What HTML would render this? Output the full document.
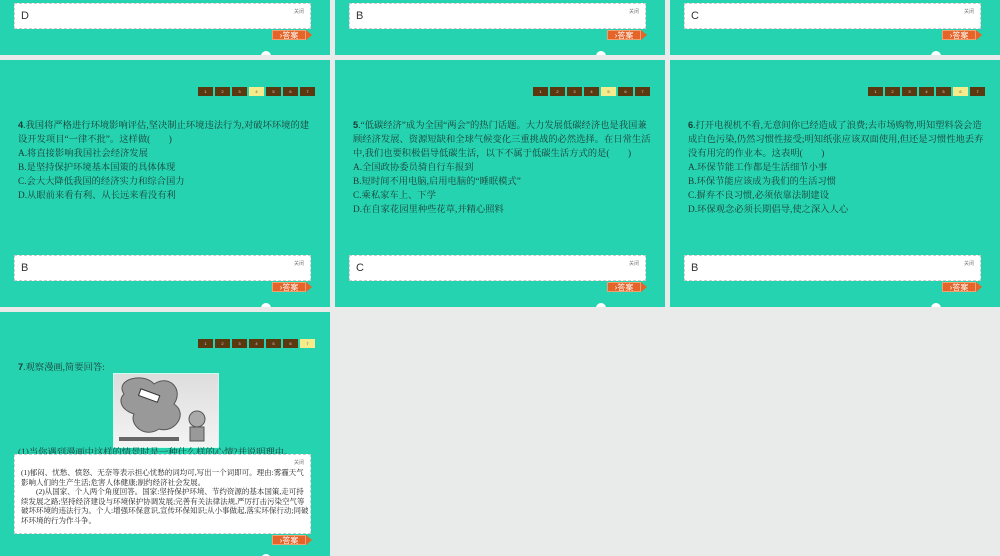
<!DOCTYPE html>
<html><head><meta charset="utf-8"><style>
body{margin:0;width:1000px;height:556px;background:#e8ebea;position:relative;overflow:hidden;font-family:"Liberation Serif","Noto Serif CJK SC",serif}
.p{position:absolute;background:#26d3b0;width:330px;overflow:hidden}
.ab{position:absolute;left:14px;width:297px;background:#fff;border:1px dashed #ccc;box-sizing:border-box}
.ab .c{position:absolute;right:6px;top:4px;font-size:5px;color:#777;font-family:"Liberation Sans","Noto Sans CJK SC",sans-serif}
.ab .l{position:absolute;left:6px;top:6px;font-size:11px;color:#333;font-family:"Liberation Sans",sans-serif}
.btn{position:absolute;left:272px;width:34px;height:10px;background:#e4642a;color:#fff;font-size:8px;line-height:10px;text-align:center;font-family:"Liberation Sans","Noto Sans CJK SC",sans-serif;border:1px solid #f0a070;box-sizing:border-box}
.btn:after{content:"";position:absolute;right:-7px;top:-1px;border-left:6px solid #e4642a;border-top:5px solid transparent;border-bottom:5px solid transparent}
.semi{position:absolute;left:261px;width:10px;height:5px;background:#fff;border-radius:5px 5px 0 0}
.nav{position:absolute;left:198px;top:27px}
.nav span{float:left;width:15px;height:9px;margin-right:2px;background:#5a3810;color:#ddd;font-size:4px;text-align:center;line-height:9px;font-family:"Liberation Sans",sans-serif}
.nav span.a{background:#f5eb8a;color:#555}
.q{position:absolute;left:18px;top:58px;font-size:9.3px;line-height:14px;color:#1b3a33;white-space:nowrap}
.q b{font-family:"Liberation Sans",sans-serif}
</style></head><body>
<div class="p" style="left:0;top:0;height:55px"><div class="ab" style="top:3px;height:26px"><span class="c">关闭</span><span class="l">D</span></div><div class="btn" style="top:30px">›答案</div><div class="semi" style="top:51px"></div></div>
<div class="p" style="left:335px;top:0;height:55px"><div class="ab" style="top:3px;height:26px"><span class="c">关闭</span><span class="l">B</span></div><div class="btn" style="top:30px">›答案</div><div class="semi" style="top:51px"></div></div>
<div class="p" style="left:670px;top:0;height:55px"><div class="ab" style="top:3px;height:26px"><span class="c">关闭</span><span class="l">C</span></div><div class="btn" style="top:30px">›答案</div><div class="semi" style="top:51px"></div></div>
<div class="p" style="left:0;top:60px;height:247px">
<div class="nav"><span>1</span><span>2</span><span>3</span><span class="a">4</span><span>5</span><span>6</span><span>7</span></div>
<div class="q"><b>4</b>.我国将严格进行环境影响评估,坚决制止环境违法行为,对破坏环境的建<br>设开发项目“一律不批”。这样做(　　)<br>A.将直接影响我国社会经济发展<br>B.是坚持保护环境基本国策的具体体现<br>C.会大大降低我国的经济实力和综合国力<br>D.从眼前来看有利、从长远来看没有利</div>
<div class="ab" style="top:195px;height:26px"><span class="c">关闭</span><span class="l">B</span></div><div class="btn" style="top:222px">›答案</div><div class="semi" style="top:243px"></div></div>
<div class="p" style="left:335px;top:60px;height:247px">
<div class="nav"><span>1</span><span>2</span><span>3</span><span>4</span><span class="a">5</span><span>6</span><span>7</span></div>
<div class="q"><b>5</b>.“低碳经济”成为全国“两会”的热门话题。大力发展低碳经济也是我国兼<br>顾经济发展、资源短缺和全球气候变化三重挑战的必然选择。在日常生活<br>中,我们也要积极倡导低碳生活，以下不属于低碳生活方式的是(　　)<br>A.全国政协委员骑自行车报到<br>B.短时间不用电脑,启用电脑的“睡眠模式”<br>C.乘私家车上、下学<br>D.在自家花园里种些花草,并精心照料</div>
<div class="ab" style="top:195px;height:26px"><span class="c">关闭</span><span class="l">C</span></div><div class="btn" style="top:222px">›答案</div><div class="semi" style="top:243px"></div></div>
<div class="p" style="left:670px;top:60px;height:247px">
<div class="nav"><span>1</span><span>2</span><span>3</span><span>4</span><span>5</span><span class="a">6</span><span>7</span></div>
<div class="q"><b>6</b>.打开电视机不看,无意间你已经造成了浪费;去市场购物,明知塑料袋会造<br>成白色污染,仍然习惯性接受;明知纸张应该双面使用,但还是习惯性地丢弃<br>没有用完的作业本。这表明(　　)<br>A.环保节能工作都是生活细节小事<br>B.环保节能应该成为我们的生活习惯<br>C.摒弃不良习惯,必须依靠法制建设<br>D.环保观念必须长期倡导,使之深入人心</div>
<div class="ab" style="top:195px;height:26px"><span class="c">关闭</span><span class="l">B</span></div><div class="btn" style="top:222px">›答案</div><div class="semi" style="top:243px"></div></div>
<div class="p" style="left:0;top:312px;height:244px">
<div class="nav"><span>1</span><span>2</span><span>3</span><span>4</span><span>5</span><span>6</span><span class="a">7</span></div>
<div class="q" style="top:48px"><b>7</b>.观察漫画,简要回答:</div>
<div style="position:absolute;left:113px;top:61px;width:104px;height:73px;background:linear-gradient(#ddd,#f4f4f4);border:1px solid #cfe"><svg width="104" height="73"><path d="M10 20 C0 5 30 -2 40 10 C55 0 70 15 60 30 C75 40 60 60 45 55 C30 65 15 50 20 40 C5 35 5 25 10 20Z" fill="#999" stroke="#555"/><rect x="25" y="18" width="20" height="7" fill="#fff" stroke="#333" transform="rotate(20 35 22)"/><circle cx="83" cy="45" r="8" fill="#aaa" stroke="#555"/><rect x="76" y="53" width="14" height="14" fill="#999" stroke="#555"/><path d="M5 65 h60" stroke="#666" stroke-width="4"/></svg></div>
<div class="q" style="top:134px;color:#1b3a33">(1)当你遇到漫画中这样的情景时是一种什么样的心情?并说明理由。</div>
<div class="ab" style="top:142px;height:80px"><span class="c">关闭</span><div style="position:absolute;left:6px;top:13px;font-size:7.5px;line-height:9.6px;color:#222;white-space:nowrap">(1)郁闷、忧愁、愤怒、无奈等表示担心忧愁的词均可,写出一个词即可。理由:雾霾天气<br>影响人们的生产生活;危害人体健康;制约经济社会发展。<br>&emsp;&emsp;(2)从国家、个人两个角度回答。国家:坚持保护环境、节约资源的基本国策,走可持<br>续发展之路;坚持经济建设与环境保护协调发展;完善有关法律法规,严厉打击污染空气等<br>破坏环境的违法行为。个人:增强环保意识,宣传环保知识;从小事做起,落实环保行动;同破<br>坏环境的行为作斗争。</div></div>
<div class="btn" style="top:223px">›答案</div><div class="semi" style="top:242px"></div></div>
</body></html>
